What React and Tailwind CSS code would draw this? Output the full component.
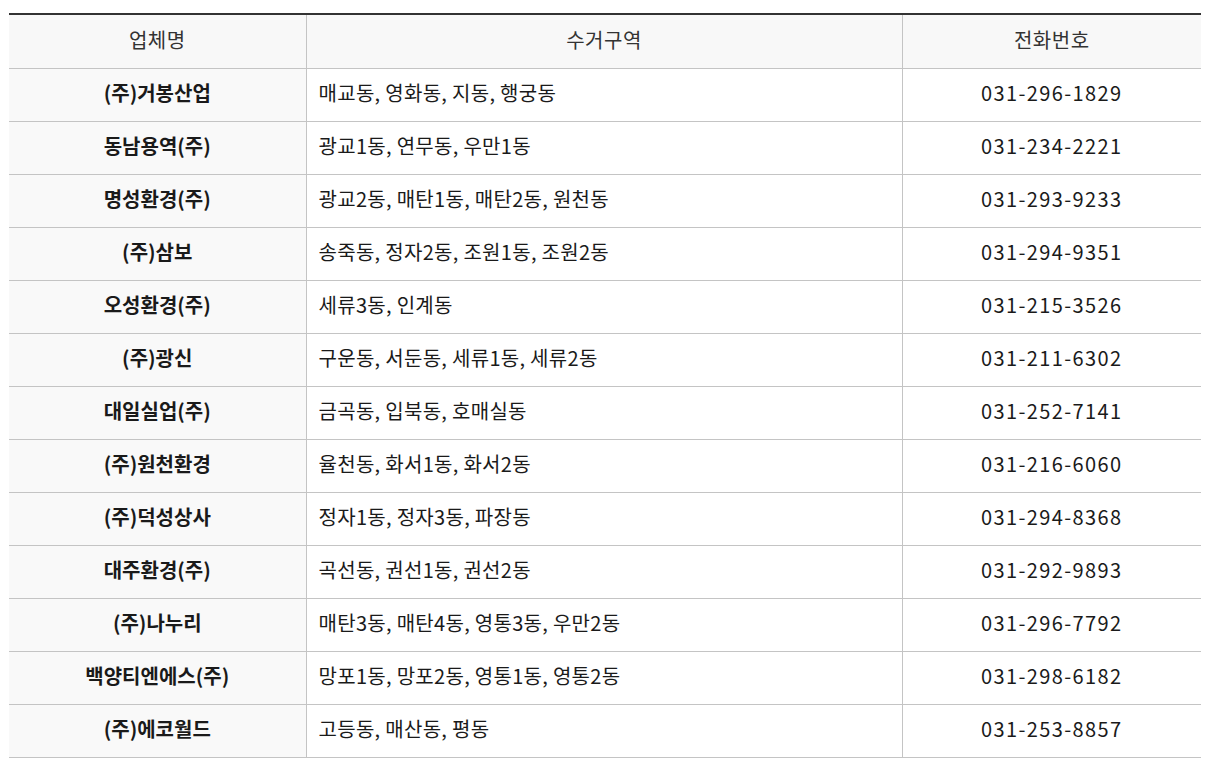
import React from "react";

const rows = [
  ["(주)거봉산업", "매교동, 영화동, 지동, 행궁동", "031-296-1829"],
  ["동남용역(주)", "광교1동, 연무동, 우만1동", "031-234-2221"],
  ["명성환경(주)", "광교2동, 매탄1동, 매탄2동, 원천동", "031-293-9233"],
  ["(주)삼보", "송죽동, 정자2동, 조원1동, 조원2동", "031-294-9351"],
  ["오성환경(주)", "세류3동, 인계동", "031-215-3526"],
  ["(주)광신", "구운동, 서둔동, 세류1동, 세류2동", "031-211-6302"],
  ["대일실업(주)", "금곡동, 입북동, 호매실동", "031-252-7141"],
  ["(주)원천환경", "율천동, 화서1동, 화서2동", "031-216-6060"],
  ["(주)덕성상사", "정자1동, 정자3동, 파장동", "031-294-8368"],
  ["대주환경(주)", "곡선동, 권선1동, 권선2동", "031-292-9893"],
  ["(주)나누리", "매탄3동, 매탄4동, 영통3동, 우만2동", "031-296-7792"],
  ["백양티엔에스(주)", "망포1동, 망포2동, 영통1동, 영통2동", "031-298-6182"],
  ["(주)에코월드", "고등동, 매산동, 평동", "031-253-8857"],
];

export default function App() {
  return (
    <div
      className="bg-white w-[1214px] h-[770px] pt-[13px] pl-[9px]"
      style={{ fontFamily: '"Noto Sans CJK KR", "Noto Sans", sans-serif' }}
    >
      <table className="w-[1192px] border-collapse table-fixed border-t-2 border-t-[#333333] text-[20px] text-[#1a1a1a]">
        <colgroup>
          <col className="w-[297px]" />
          <col className="w-[596px]" />
          <col className="w-[299px]" />
        </colgroup>
        <thead>
          <tr className="h-[54px] bg-[#f8f8f8] border-b border-[#c4c4c4]">
            <th className="font-normal text-[#333333] text-center border-r border-[#c4c4c4] tracking-[0.5px] pb-[2px]">업체명</th>
            <th className="font-normal text-[#333333] text-center border-r border-[#c4c4c4] tracking-[0.5px] pb-[2px]">수거구역</th>
            <th className="font-normal text-[#333333] text-center tracking-[0.5px] pb-[2px]">전화번호</th>
          </tr>
        </thead>
        <tbody>
          {rows.map((r, i) => (
            <tr key={i} className="h-[53px] border-b border-[#c4c4c4]">
              <td className="bg-[#f9f9f9] font-bold text-center border-r border-[#c4c4c4] pb-[3px]">{r[0]}</td>
              <td className="text-left pl-[12px] border-r border-[#c4c4c4] tracking-[0.3px] pb-[3px]">{r[1]}</td>
              <td className="text-center tracking-[1.4px] pb-[3px]">{r[2]}</td>
            </tr>
          ))}
        </tbody>
      </table>
    </div>
  );
}
